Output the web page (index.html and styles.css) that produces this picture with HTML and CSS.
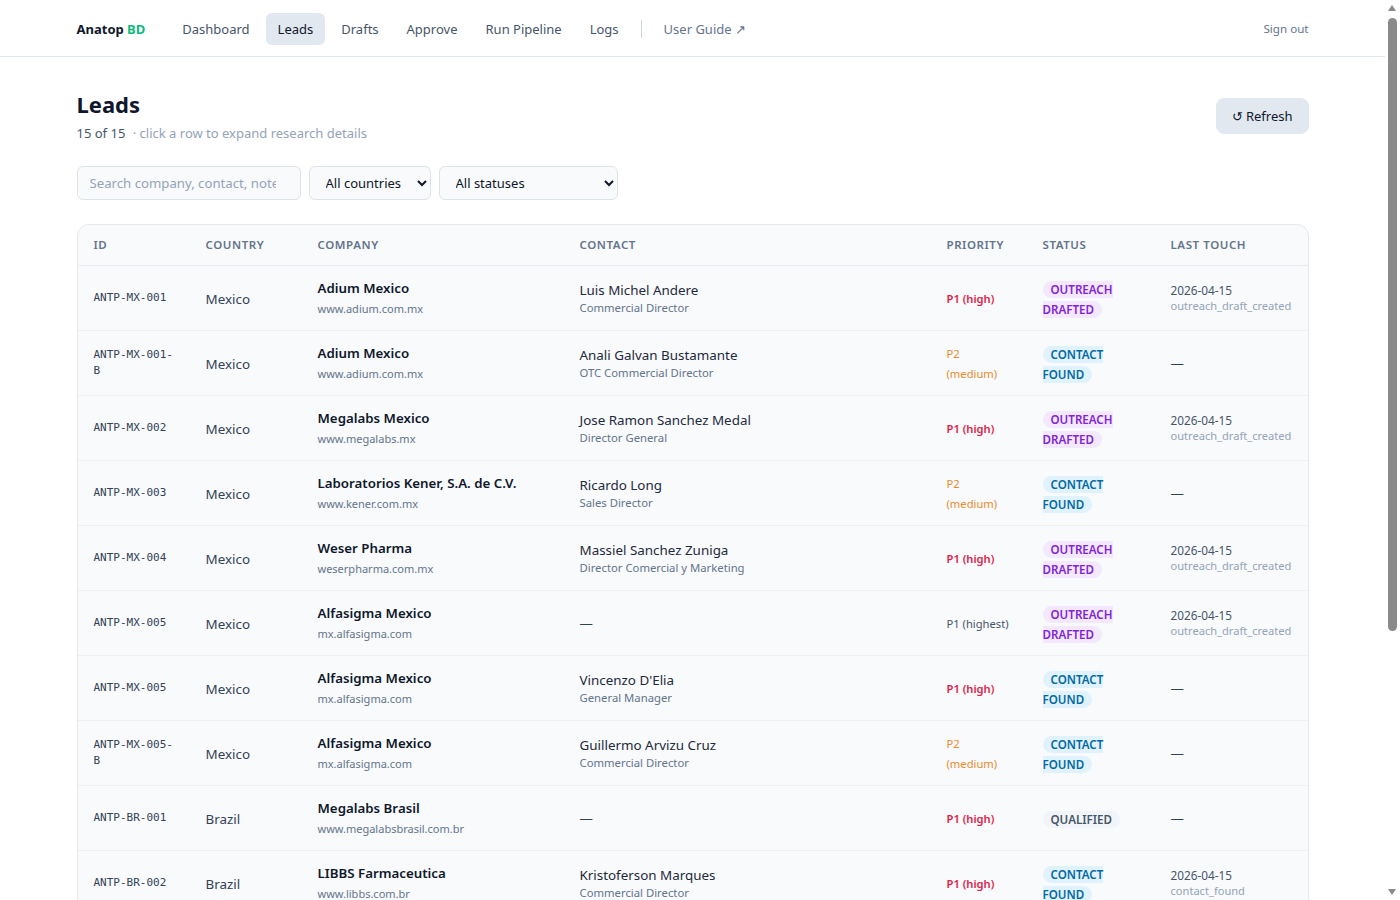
FILE: index.html
```html
<!DOCTYPE html>
<html>
<head>
  <meta charset="utf-8">
  <title>Leads · Anatop BD</title>
  <link rel="stylesheet" href="styles.css">
</head>
<body>
  <header class="topbar">
    <div class="topbar-inner">
      <nav class="nav">
        <a class="brand" href="#">Anatop <span class="brand-bd">BD</span></a>
        <a class="nav-link" href="#">Dashboard</a>
        <a class="nav-link active" href="#">Leads</a>
        <a class="nav-link" href="#">Drafts</a>
        <a class="nav-link" href="#">Approve</a>
        <a class="nav-link" href="#">Run Pipeline</a>
        <a class="nav-link" href="#">Logs</a>
        <span class="nav-sep"></span>
        <a class="nav-link ext" href="#">User Guide ↗</a>
      </nav>
      <a class="signout" href="#">Sign out</a>
    </div>
  </header>

  <main class="page">
    <div class="page-head">
      <div>
        <h1>Leads</h1>
        <p class="sub"><span class="count">15 of 15</span> · click a row to expand research details</p>
      </div>
      <button class="btn">↺ Refresh</button>
    </div>

    <div class="filters">
      <input class="search" type="text" placeholder="Search company, contact, notes">
      <select class="sel sel-country"><option>All countries</option></select>
      <select class="sel sel-status"><option>All statuses</option></select>
    </div>

    <div class="card">
      <table class="leads">
        <colgroup>
          <col style="width:112px">
          <col style="width:112px">
          <col style="width:262px">
          <col style="width:367px">
          <col style="width:96px">
          <col style="width:128px">
          <col>
        </colgroup>
        <thead>
          <tr>
            <th>ID</th><th>Country</th><th>Company</th><th>Contact</th><th>Priority</th><th>Status</th><th>Last touch</th>
          </tr>
        </thead>
        <tbody>
          <tr>
            <td class="id">ANTP-MX-001</td>
            <td class="country">Mexico</td>
            <td><div class="co">Adium Mexico</div><div class="dom">www.adium.com.mx</div></td>
            <td><div class="ct">Luis Michel Andere</div><div class="role">Commercial Director</div></td>
            <td class="pri high">P1 (high)</td>
            <td class="st"><span class="badge drafted">OUTREACH DRAFTED</span></td>
            <td><div class="date">2026-04-15</div><div class="ev">outreach_draft_created</div></td>
          </tr>
          <tr>
            <td class="id">ANTP-MX-001-B</td>
            <td class="country">Mexico</td>
            <td><div class="co">Adium Mexico</div><div class="dom">www.adium.com.mx</div></td>
            <td><div class="ct">Anali Galvan Bustamante</div><div class="role">OTC Commercial Director</div></td>
            <td class="pri med">P2 (medium)</td>
            <td class="st"><span class="badge found">CONTACT FOUND</span></td>
            <td><span class="dash">—</span></td>
          </tr>
          <tr>
            <td class="id">ANTP-MX-002</td>
            <td class="country">Mexico</td>
            <td><div class="co">Megalabs Mexico</div><div class="dom">www.megalabs.mx</div></td>
            <td><div class="ct">Jose Ramon Sanchez Medal</div><div class="role">Director General</div></td>
            <td class="pri high">P1 (high)</td>
            <td class="st"><span class="badge drafted">OUTREACH DRAFTED</span></td>
            <td><div class="date">2026-04-15</div><div class="ev">outreach_draft_created</div></td>
          </tr>
          <tr>
            <td class="id">ANTP-MX-003</td>
            <td class="country">Mexico</td>
            <td><div class="co">Laboratorios Kener, S.A. de C.V.</div><div class="dom">www.kener.com.mx</div></td>
            <td><div class="ct">Ricardo Long</div><div class="role">Sales Director</div></td>
            <td class="pri med">P2 (medium)</td>
            <td class="st"><span class="badge found">CONTACT FOUND</span></td>
            <td><span class="dash">—</span></td>
          </tr>
          <tr>
            <td class="id">ANTP-MX-004</td>
            <td class="country">Mexico</td>
            <td><div class="co">Weser Pharma</div><div class="dom">weserpharma.com.mx</div></td>
            <td><div class="ct">Massiel Sanchez Zuniga</div><div class="role">Director Comercial y Marketing</div></td>
            <td class="pri high">P1 (high)</td>
            <td class="st"><span class="badge drafted">OUTREACH DRAFTED</span></td>
            <td><div class="date">2026-04-15</div><div class="ev">outreach_draft_created</div></td>
          </tr>
          <tr>
            <td class="id">ANTP-MX-005</td>
            <td class="country">Mexico</td>
            <td><div class="co">Alfasigma Mexico</div><div class="dom">mx.alfasigma.com</div></td>
            <td><span class="dash">—</span></td>
            <td class="pri top">P1 (highest)</td>
            <td class="st"><span class="badge drafted">OUTREACH DRAFTED</span></td>
            <td><div class="date">2026-04-15</div><div class="ev">outreach_draft_created</div></td>
          </tr>
          <tr>
            <td class="id">ANTP-MX-005</td>
            <td class="country">Mexico</td>
            <td><div class="co">Alfasigma Mexico</div><div class="dom">mx.alfasigma.com</div></td>
            <td><div class="ct">Vincenzo D'Elia</div><div class="role">General Manager</div></td>
            <td class="pri high">P1 (high)</td>
            <td class="st"><span class="badge found">CONTACT FOUND</span></td>
            <td><span class="dash">—</span></td>
          </tr>
          <tr>
            <td class="id">ANTP-MX-005-B</td>
            <td class="country">Mexico</td>
            <td><div class="co">Alfasigma Mexico</div><div class="dom">mx.alfasigma.com</div></td>
            <td><div class="ct">Guillermo Arvizu Cruz</div><div class="role">Commercial Director</div></td>
            <td class="pri med">P2 (medium)</td>
            <td class="st"><span class="badge found">CONTACT FOUND</span></td>
            <td><span class="dash">—</span></td>
          </tr>
          <tr>
            <td class="id">ANTP-BR-001</td>
            <td class="country">Brazil</td>
            <td><div class="co">Megalabs Brasil</div><div class="dom">www.megalabsbrasil.com.br</div></td>
            <td><span class="dash">—</span></td>
            <td class="pri high">P1 (high)</td>
            <td class="st"><span class="badge qual">QUALIFIED</span></td>
            <td><span class="dash">—</span></td>
          </tr>
          <tr>
            <td class="id">ANTP-BR-002</td>
            <td class="country">Brazil</td>
            <td><div class="co">LIBBS Farmaceutica</div><div class="dom">www.libbs.com.br</div></td>
            <td><div class="ct">Kristoferson Marques</div><div class="role">Commercial Director</div></td>
            <td class="pri high">P1 (high)</td>
            <td class="st"><span class="badge found">CONTACT FOUND</span></td>
            <td><div class="date">2026-04-15</div><div class="ev">contact_found</div></td>
          </tr>
          <tr>
            <td class="id">ANTP-BR-003</td>
            <td class="country">Brazil</td>
            <td><div class="co">Eurofarma</div><div class="dom">www.eurofarma.com.br</div></td>
            <td><div class="ct">Renata Campos</div><div class="role">Business Development Manager</div></td>
            <td class="pri med">P2 (medium)</td>
            <td class="st"><span class="badge found">CONTACT FOUND</span></td>
            <td><span class="dash">—</span></td>
          </tr>
          <tr>
            <td class="id">ANTP-BR-004</td>
            <td class="country">Brazil</td>
            <td><div class="co">Aché Laboratórios</div><div class="dom">www.ache.com.br</div></td>
            <td><span class="dash">—</span></td>
            <td class="pri med">P2 (medium)</td>
            <td class="st"><span class="badge qual">QUALIFIED</span></td>
            <td><span class="dash">—</span></td>
          </tr>
          <tr>
            <td class="id">ANTP-CO-001</td>
            <td class="country">Colombia</td>
            <td><div class="co">Tecnoquímicas</div><div class="dom">www.tqconfiable.com</div></td>
            <td><div class="ct">Andres Felipe Rojas</div><div class="role">Director Comercial</div></td>
            <td class="pri high">P1 (high)</td>
            <td class="st"><span class="badge drafted">OUTREACH DRAFTED</span></td>
            <td><div class="date">2026-04-14</div><div class="ev">outreach_draft_created</div></td>
          </tr>
          <tr>
            <td class="id">ANTP-CO-002</td>
            <td class="country">Colombia</td>
            <td><div class="co">Procaps</div><div class="dom">www.procapsgroup.com</div></td>
            <td><span class="dash">—</span></td>
            <td class="pri med">P2 (medium)</td>
            <td class="st"><span class="badge qual">QUALIFIED</span></td>
            <td><span class="dash">—</span></td>
          </tr>
          <tr>
            <td class="id">ANTP-CL-001</td>
            <td class="country">Chile</td>
            <td><div class="co">Laboratorios Andrómaco</div><div class="dom">www.andromaco.cl</div></td>
            <td><div class="ct">Camila Fuentes</div><div class="role">Gerente Comercial</div></td>
            <td class="pri med">P2 (medium)</td>
            <td class="st"><span class="badge found">CONTACT FOUND</span></td>
            <td><span class="dash">—</span></td>
          </tr>
        </tbody>
      </table>
    </div>
  </main>

  <!-- page scrollbar as the browser drew it -->
  <div class="scrollbar" aria-hidden="true">
    <span class="sb-up"></span>
    <span class="sb-thumb"></span>
    <span class="sb-down"></span>
  </div>
</body>
</html>
```

FILE: styles.css
```css
*{
  margin: 0;
  padding: 0;
  box-sizing: border-box;
}
body{
  font-family: "Noto Sans", "Open Sans", sans-serif;
  color: #0f172a;
  background: #fff;
  margin-right: 15px;
}
a{
  text-decoration: none;
  color: inherit;
}

/* top bar */
.topbar{
  height: 57px;
  border-bottom: 1px solid #e2e8f0;
}
.topbar-inner{
  max-width: 1232px;
  margin: 0 auto;
  height: 56px;
  display: flex;
  align-items: center;
  justify-content: space-between;
}
.nav{
  display: flex;
  align-items: center;
  gap: 4px;
  padding-top: 1px;
}
.brand{
  font-weight: 700;
  font-size: 13px;
  color: #0f172a;
  margin-right: 21px;
}
.brand-bd{
  color: #10b981;
}
.nav-link{
  font-size: 13px;
  color: #475569;
  padding: 6px 12px;
  border-radius: 6px;
  line-height: 20px;
}
.nav-link.active{
  background: #e2e8f0;
  color: #0f172a;
}
.nav-link.ext{
  color: #64748b;
}
.nav-sep{
  width: 1px;
  height: 18px;
  background: #cbd5e1;
  margin: 0 6px;
}
.signout{
  font-size: 11.6px;
  color: #64748b;
}

/* page */
.page{
  max-width: 1232px;
  margin: 0 auto;
  padding: 32px 0 40px;
}
.page-head{
  display: flex;
  justify-content: space-between;
  align-items: flex-start;
}
h1{
  font-size: 22px;
  font-weight: 700;
  line-height: 30px;
  color: #0f172a;
}
.sub{
  font-size: 13px;
  color: #94a3b8;
  margin-top: 5px;
}
.count{
  color: #475569;
  margin-right: 4px;
}
.btn{
  font-family: inherit;
  font-size: 13px;
  color: #0f172a;
  background: #e2e8f0;
  border: 1px solid #e2e8f0;
  border-radius: 8px;
  padding: 0 15px;
  height: 36px;
  margin-top: 9px;
}

/* filters */
.filters{
  display: flex;
  gap: 8px;
  margin-top: 24px;
}
.search,.sel{
  font-family: inherit;
  font-size: 13px;
  height: 34px;
  border: 1px solid #dde3ea;
  border-radius: 6px;
  background: #f8fafc;
  color: #0f172a;
}
.search{
  width: 224px;
  padding: 0 24px 0 12px;
  font-size: 13.2px;
}
.search::placeholder{
  color: #94a3b8;
}
.sel{
  padding: 0 8px 0 12px;
}
.sel-country{
  width: 122px;
}
.sel-status{
  width: 179px;
}

/* table */
.card{
  margin-top: 24px;
  border: 1px solid #e5e7eb;
  border-radius: 12px;
  background: #f8fafc;
  overflow: hidden;
}
.leads{
  width: 100%;
  border-collapse: collapse;
  table-layout: fixed;
}
.leads th{
  text-align: left;
  font-size: 11.5px;
  font-weight: 600;
  letter-spacing: 0.05em;
  text-transform: uppercase;
  color: #64748b;
  padding: 11px 16px 11px;
  line-height: 18px;
  border-bottom: 1px solid #e8edf3;
}
.leads td{
  padding: 12px 16px;
  height: 63.8px;
  vertical-align: middle;
  border-top: 1px solid #edf0f4;
  font-size: 13.4px;
  line-height: 20px;
  color: #334155;
}
.leads tbody tr:first-child td{
  border-top: none;
}
.leads td.id{
  font-family: "DejaVu Sans Mono", monospace;
  font-size: 11px;
  line-height: 16px;
  color: #334155;
  word-break: break-word;
}
.leads td.country{
  padding-top: 14px;
}
.co{
  font-weight: 600;
  font-size: 13.3px;
  color: #0f172a;
  line-height: 20px;
}
.dom{
  font-size: 11px;
  color: #64748b;
  line-height: 18px;
  margin-top: 2px;
}
.ct{
  color: #1e293b;
  line-height: 20px;
}
.role{
  font-size: 11.3px;
  color: #64748b;
  line-height: 16px;
}
.dash{
  color: #334155;
}
.leads td.pri{
  font-size: 11.2px;
  line-height: 20px;
  padding-top: 13px;
  padding-bottom: 11px;
}
.leads td.high{
  color: #e11d48;
  font-weight: 600;
}
.leads td.med{
  color: #ea8a2c;
}
.leads td.top{
  color: #475569;
}
.leads td.st{
  font-size: 11.6px;
  line-height: 20px;
  padding-top: 14px;
  padding-bottom: 10px;
}
.badge{
  font-weight: 600;
  padding: 1px 8px;
  border-radius: 10px;
}
.badge.drafted{
  background: #f3e8ff;
  color: #8124d6;
}
.badge.found{
  background: #e0f2fe;
  color: #0369a1;
}
.badge.qual{
  background: #f1f5f9;
  color: #475569;
}
.date{
  font-size: 11.8px;
  color: #475569;
  line-height: 16px;
}
.ev{
  font-size: 11.1px;
  color: #94a3b8;
  line-height: 16px;
}

/* fake page scrollbar */
.scrollbar{
  position: fixed;
  top: 0;
  right: 0;
  width: 15px;
  height: 100%;
  background: #fff;
}
.sb-up,.sb-down{
  position: absolute;
  left: 3px;
  width: 0;
  height: 0;
  border-left: 4.5px solid transparent;
  border-right: 4.5px solid transparent;
}
.sb-up{
  top: 5px;
  border-bottom: 6px solid #8a8a8a;
}
.sb-down{
  bottom: 5px;
  border-top: 6px solid #8a8a8a;
}
.sb-thumb{
  position: absolute;
  left: 3px;
  top: 18px;
  width: 9px;
  height: 613px;
  border-radius: 5px;
  background: #8a8a8a;
}
```
